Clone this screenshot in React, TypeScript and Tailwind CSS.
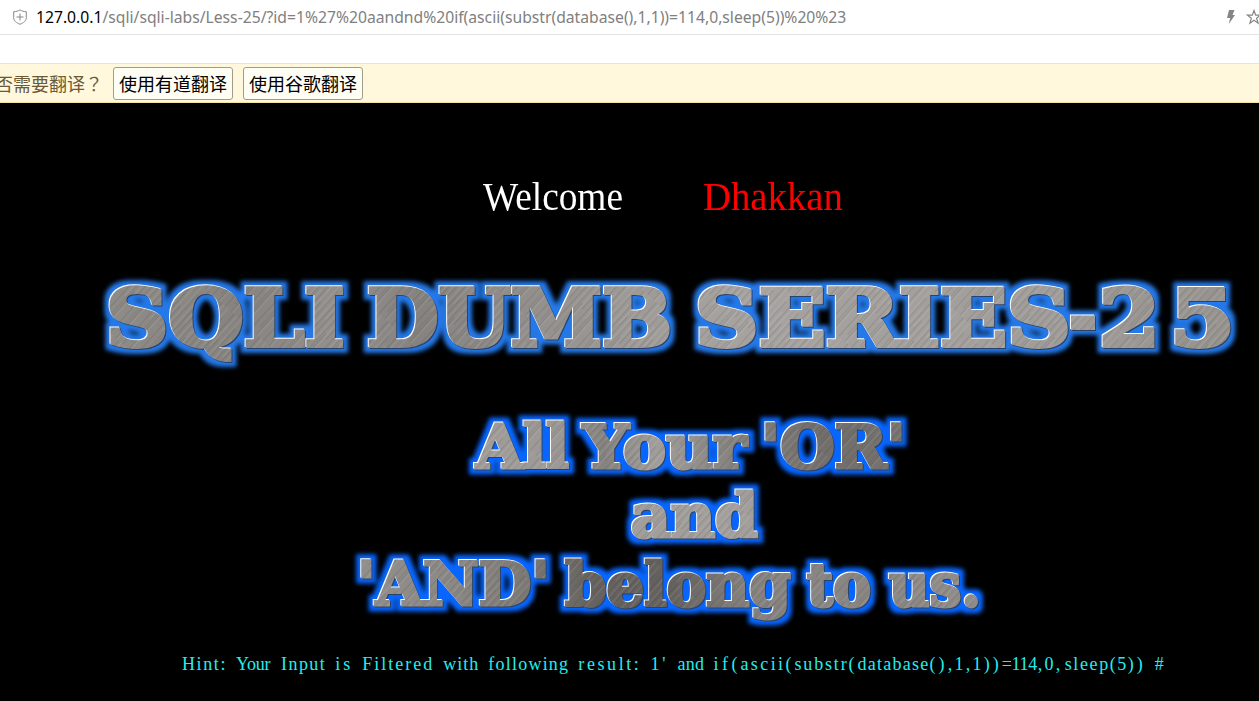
type Word = { text: string; x: number; y: number; width: number };

const titleWords: Word[] = [
  { text: 'SQLI', x: 106, y: 243, width: 239 },
  { text: 'DUMB', x: 367, y: 243, width: 305 },
  { text: 'SERIES', x: 695, y: 243, width: 376 },
  { text: '-', x: 1069, y: 241, width: 28 },
  { text: '2', x: 1099, y: 243, width: 61 },
  { text: '5', x: 1170, y: 243, width: 65 },
];

const mottoWords: Word[] = [
  { text: 'All', x: 476, y: 365, width: 93 },
  { text: 'Your', x: 583, y: 365, width: 164 },
  { text: "'OR'", x: 761, y: 365, width: 145 },
  { text: 'and', x: 631, y: 434, width: 127 },
  { text: "'AND'", x: 357, y: 502, width: 193 },
  { text: 'belong', x: 565, y: 503, width: 226 },
  { text: 'to', x: 807, y: 503, width: 64 },
  { text: 'us.', x: 889, y: 503, width: 92 },
];

type MetalProps = { words: Word[]; filter: string; fill: string; size: number; weight: number };

function MetalWords({ words, filter, fill, size, weight }: MetalProps) {
  return (
    <g filter={filter} fill={fill} stroke={fill} strokeWidth={weight} strokeLinejoin="miter" fontSize={size}>
      {words.map((w) => (
        <text key={w.text} x={w.x} y={w.y} textLength={w.width} lengthAdjust="spacingAndGlyphs">
          {w.text}
        </text>
      ))}
    </g>
  );
}

function MetalFilter({ id, color, spread }: { id: string; color: string; spread: number }) {
  return (
    <filter id={id} filterUnits="userSpaceOnUse" x="0" y="120" width="1259" height="420" colorInterpolationFilters="sRGB">
      <feMorphology in="SourceAlpha" operator="dilate" radius={spread} result="fat" />
      <feGaussianBlur in="fat" stdDeviation="2.3" result="soft" />
      <feFlood floodColor={color} />
      <feComposite in2="soft" operator="in" result="glow" />
      <feOffset in="SourceAlpha" dx="-0.8" dy="-0.8" result="up" />
      <feFlood floodColor="#ffffff" />
      <feComposite in2="up" operator="in" result="light" />
      <feOffset in="SourceAlpha" dx="0.8" dy="0.8" result="down" />
      <feFlood floodColor="#28436b" />
      <feComposite in2="down" operator="in" result="dark" />
      <feMerge>
        <feMergeNode in="glow" />
        <feMergeNode in="dark" />
        <feMergeNode in="light" />
        <feMergeNode in="SourceGraphic" />
      </feMerge>
    </filter>
  );
}

function Banner() {
  return (
    <svg className="block h-[540px] w-[1259px] font-['DejaVu_Serif'] font-bold" viewBox="0 0 1259 540">
      <defs>
        <linearGradient id="sheenTitle" gradientUnits="userSpaceOnUse" x1="105" y1="180" x2="1230" y2="250">
          <stop offset="0" stopColor="#8f8c88" />
          <stop offset="0.12" stopColor="#868380" />
          <stop offset="0.2" stopColor="#928f8c" />
          <stop offset="0.28" stopColor="#85827f" />
          <stop offset="0.4" stopColor="#95928f" />
          <stop offset="0.55" stopColor="#a5a29f" />
          <stop offset="0.8" stopColor="#a19e9b" />
          <stop offset="1" stopColor="#96938f" />
        </linearGradient>
        <linearGradient id="sheenUpper" gradientUnits="userSpaceOnUse" x1="475" y1="0" x2="905" y2="0">
          <stop offset="0" stopColor="#9f9c99" />
          <stop offset="0.2" stopColor="#9b9895" />
          <stop offset="0.3" stopColor="#85827f" />
          <stop offset="0.42" stopColor="#a09d9a" />
          <stop offset="0.6" stopColor="#85827f" />
          <stop offset="0.8" stopColor="#716e6c" />
          <stop offset="1" stopColor="#75726f" />
        </linearGradient>
        <linearGradient id="sheenLower" gradientUnits="userSpaceOnUse" x1="360" y1="0" x2="980" y2="0">
          <stop offset="0" stopColor="#918e8b" />
          <stop offset="0.15" stopColor="#8b8885" />
          <stop offset="0.3" stopColor="#77746f" />
          <stop offset="0.38" stopColor="#65625f" />
          <stop offset="0.5" stopColor="#63605e" />
          <stop offset="0.62" stopColor="#84817e" />
          <stop offset="1" stopColor="#8f8c89" />
        </linearGradient>
        <pattern id="scratches" patternUnits="userSpaceOnUse" width="17" height="97" patternTransform="rotate(42)">
          <path d="M1 0v60M7 20v77M12.5 0v40" stroke="#fff" strokeOpacity=".18" strokeWidth="0.7" />
          <path d="M3 10v80M9.500 0v55M14.500 30v67M5.500 50v47" stroke="#222" strokeOpacity=".2" strokeWidth="0.7" />
        </pattern>
        <pattern id="brushed" patternUnits="userSpaceOnUse" width="1259" height="540">
          <rect width="1259" height="300" fill="url(#sheenTitle)" />
          <rect y="300" width="1259" height="82" fill="url(#sheenUpper)" />
          <rect y="382" width="1259" height="61" fill="#a19e9b" />
          <rect y="443" width="1259" height="97" fill="url(#sheenLower)" />
          <rect width="1259" height="540" fill="url(#scratches)" />
        </pattern>
        <MetalFilter id="title" color="#2478e8" spread={5} />
        <MetalFilter id="motto" color="#0866ff" spread={5} />
      </defs>
      <MetalWords words={titleWords} filter="url(#title)" fill="url(#brushed)" size={79} weight={4} />
      <MetalWords words={mottoWords} filter="url(#motto)" fill="url(#brushed)" size={59} weight={3} />
    </svg>
  );
}

const hint = [
  'Hint:', ' ', 'Your', ' ', 'Input', ' ', 'is', ' ', 'Filtered', ' ', 'with', ' ', 'following', ' ', 'result:', ' ',
  "1'", ' ', 'and', ' ', 'if', '(', 'ascii', '(', 'substr', '(', 'database', '()', ',1', ',1', '))', '=114', ',0', ',',
  'sleep', '(5', '))', ' ', '#',
];

const advances: [string, number][] = [
  ["'", 0.18],
  [',.', 0.25],
  ['ijlt: ', 0.278],
  ['()frI', 0.333],
  ['s', 0.389],
  ['ace', 0.444],
  ['F', 0.556],
  ['=', 0.564],
  ['HYw', 0.722],
  ['m', 0.778],
];
const CELL = 9.01;
const HINT_SIZE = 18;

// Spreads a token's glyphs over fixed-width character cells.
function gridTracking(token: string) {
  const em = [...token].reduce((sum, c) => sum + (advances.find(([set]) => set.includes(c))?.[1] ?? 0.5), 0);
  return CELL - (em * HINT_SIZE) / token.length;
}

export default function App() {
  return (
    <div className="flex h-[701px] w-[1259px] flex-col overflow-hidden bg-black">
      <header className="flex h-[35px] shrink-0 items-center border-b border-[#e3e3e3] bg-white pb-px pl-3">
        <svg className="mr-2 size-4 shrink-0" viewBox="0 0 16 16" fill="none" stroke="#85888a">
          <path d="M8 .9c2 1.2 4 1.8 6.3 1.8v6.1c0 3-2.8 5-6.3 6.5-3.500-1.500-6.300-3.500-6.300-6.500V2.700C4 2.700 6 2.100 8 .9ZM8 4.500v7M4.500 8h7" />
        </svg>
        <p className="whitespace-nowrap font-['Noto_Sans',sans-serif] text-[15.69px] leading-6 text-[#808080]">
          <span className="text-black">127.0.0.1</span>
          /sqli/sqli-labs/Less-25/?id=1%27%20aandnd%20if(ascii(substr(database(),1,1))=114,0,sleep(5))%20%23
        </p>
        <svg className="ml-auto h-4 w-[10px] shrink-0" viewBox="0 0 10 16" fill="#858585">
          <path d="M3 1h5.500L6.500 6H9L2.800 15l1.400-6H1Z" />
        </svg>
        <svg className="-mr-[3px] ml-2.5 size-4 shrink-0" viewBox="0 0 16 16" fill="none" stroke="#858585" strokeWidth="1.200">
          <path d="m8 1.500 1.700 4.700h4.800l-3.900 3 1.500 5L8 11.300l-4.100 2.900 1.500-5-3.900-3h4.800Z" />
        </svg>
      </header>
      <div className="h-7 shrink-0 bg-white" />
      <section className="flex h-10 shrink-0 items-center border-b border-t border-b-[#f5e2a0] border-t-[#e3e3e3] bg-[#fff8dc] font-['Noto_Sans_CJK_SC',sans-serif] text-lg leading-none">
        <span className="-ml-[5px] w-[118px] shrink-0 whitespace-nowrap text-[#6b5a35]">
          否需要翻译
          <span className="font-['Noto_Sans_CJK_TC',sans-serif]" lang="zh-TW">？</span>
        </span>
        <button className="mr-2.5 h-[33px] w-[120px] shrink-0 whitespace-nowrap rounded-[3px] border border-[#a09c88] bg-[#fffef5] text-black">
          使用有道翻译
        </button>
        <button className="h-[33px] w-[120px] shrink-0 whitespace-nowrap rounded-[3px] border border-[#a09c88] bg-[#fffef5] text-black">
          使用谷歌翻译
        </button>
      </section>
      <main className="flex flex-1 flex-col bg-black">
        <h1 className="flex h-[120px] shrink-0 pl-[483px] pt-[69px] font-['Liberation_Serif',serif] text-[41px] leading-[48px]">
          <span className="w-[220px] shrink-0 origin-left scale-x-[0.91] text-white">Welcome</span>
          <span className="shrink-0 origin-left scale-x-[0.945] text-[#f00]">Dhakkan</span>
        </h1>
        <div className="-mt-[120px] h-[540px] shrink-0">
          <Banner />
        </div>
        <p className="flex h-8 shrink-0 whitespace-pre pl-[182px] pt-[9px] font-['Liberation_Serif',serif] text-[18px] leading-6 text-[#22eeee]">
          {hint.map((token, i) => (
            <span key={i} style={{ width: token.length * CELL, letterSpacing: gridTracking(token) }}>
              {token}
            </span>
          ))}
        </p>
      </main>
    </div>
  );
}
